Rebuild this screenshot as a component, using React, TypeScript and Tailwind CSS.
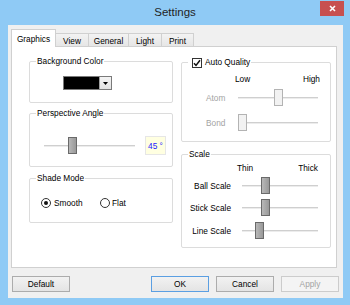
// Settings dialog (Win8 look) — Graphics tab with group boxes, sliders and a button row.
import type { ReactNode } from "react";

const TABS = ["Graphics", "View", "General", "Light", "Print"];
const TAB_W: Record<string, string> = {
  Graphics: "w-[45px]",
  View: "w-[34px]",
  General: "w-[41px]",
  Light: "w-[34px]",
  Print: "w-[33px]",
};

function Group({ title, className, children }: { title: ReactNode; className: string; children?: ReactNode }) {
  return (
    <div className={`relative border border-[#dcdcdc] rounded-[2px] ${className}`}>
      <div className="absolute left-[6px] top-[-6px] bg-white px-[1px] leading-[11px] flex items-center">{title}</div>
      {children}
    </div>
  );
}

function Slider({ w, pos, disabled }: { w: string; pos: number; disabled?: boolean }) {
  return (
    <div className={`relative h-[17px] shrink-0 ${w}`}>
      <div className="absolute left-0 right-0 top-[8px] h-[2px] border-t border-[#cfcfcf] bg-[#ececec]" />
      <div
        className={`absolute top-0 h-[17px] w-[9px] border ${
          disabled ? "border-[#b3b3b3] bg-[#f2f2f2]" : "border-[#6a6a6a] bg-gradient-to-r from-[#b8b8b8] to-[#999999]"
        }`}
        style={{ left: pos }}
      />
    </div>
  );
}

function Radio({ checked }: { checked?: boolean }) {
  return (
    <span className="w-[10px] h-[10px] rounded-full border border-[#333333] bg-white flex items-center justify-center shrink-0">
      {checked && <span className="w-[4px] h-[4px] rounded-full bg-[#111111]" />}
    </span>
  );
}

function Button({ label, kind }: { label: string; kind?: "focus" | "disabled" }) {
  const look =
    kind === "focus"
      ? "border-[#5b9fe2] bg-gradient-to-b from-[#f2f2f2] to-[#e4e4e4]"
      : kind === "disabled"
        ? "border-[#cccccc] bg-[#f4f4f4] text-[#a3a3a3]"
        : "border-[#acacac] bg-gradient-to-b from-[#f2f2f2] to-[#e4e4e4]";
  return <div className={`w-[58px] h-[16px] border flex items-center justify-center ${look}`}>{label}</div>;
}

export default function App() {
  return (
    <div className="w-[350px] h-[305px] bg-[#8fcaf5] flex flex-col font-['Liberation_Sans',Arial,sans-serif] text-[8.3px] leading-[10px] text-black select-none">
      {/* Title bar */}
      <div className="h-[25px] shrink-0 relative">
        <div className="text-center text-[11.5px] leading-[14px] pt-[5px] text-[#1f1f1f]">Settings</div>
        <div className="absolute top-[1px] right-[6px] w-[24px] h-[15px] bg-[#c75050] flex items-center justify-center">
          <svg width="7" height="7" viewBox="0 0 7 7">
            <path d="M1 1L6 6M6 1L1 6" stroke="white" strokeWidth="1.6" />
          </svg>
        </div>
      </div>

      {/* Client area */}
      <div className="ml-[8px] w-[335px] h-[273px] bg-[#f0f0f0] flex flex-col">
        <div className="pl-[3px] pt-[4px]">
          {/* Tabs */}
          <div className="flex items-end h-[17px]">
            {TABS.map((t, i) =>
              i === 0 ? (
                <div key={t} className={`relative z-10 h-[18px] mb-[-1px] bg-white border border-b-0 border-[#d0d0d0] pt-[4px] text-center ${TAB_W[t]}`}>
                  {t}
                </div>
              ) : (
                <div key={t} className={`h-[13px] ml-[-1px] border border-b-0 border-[#d0d0d0] bg-gradient-to-b from-[#f3f3f3] to-[#e6e6e6] pt-[2px] text-center ${TAB_W[t]}`}>
                  {t}
                </div>
              ),
            )}
          </div>

          {/* Panel */}
          <div className="w-[326px] h-[222px] bg-white border border-[#d0d0d0] flex items-start pt-[14px] pl-[17px]">
            {/* Left column */}
            <div className="w-[144px] flex flex-col">
              <Group title="Background Color" className="h-[42px] pt-[14px] pl-[33px]">
                <div className="flex w-[49px] h-[14px] border border-[#7a7a7a] bg-white">
                  <div className="w-[35px] bg-black" />
                  <div className="flex-1 flex items-center justify-center bg-gradient-to-b from-[#f4f4f4] to-[#e2e2e2] border-l border-[#a0a0a0]">
                    <svg width="5" height="3" viewBox="0 0 5 3">
                      <path d="M0 0H5L2.5 3Z" fill="#000" />
                    </svg>
                  </div>
                </div>
              </Group>

              <Group title="Perspective Angle" className="mt-[10px] h-[54px] pt-[22px] pl-[14px]">
                <div className="flex items-center h-[19px]">
                  <Slider w="w-[91px]" pos={24} />
                  <div className="ml-[10px] w-[21px] h-[19px] bg-[#ffffe1] border border-[#e6e6e6] flex items-center justify-center text-[#2323ff]">
                    45 °
                  </div>
                </div>
              </Group>

              <Group title="Shade Mode" className="mt-[11px] h-[45px] pt-[19px] pl-[11px]">
                <div className="flex items-center h-[10px]">
                  <Radio checked />
                  <span className="ml-[3px] w-[46px]">Smooth</span>
                  <Radio />
                  <span className="ml-[2px]">Flat</span>
                </div>
              </Group>
            </div>

            {/* Right column */}
            <div className="ml-[8px] w-[150px] mt-[1px] flex flex-col">
              <Group
                className="h-[80px] pt-[11px]"
                title={
                  <>
                    <span className="ml-[3px] w-[10px] h-[10px] border border-[#333333] bg-white flex items-center justify-center">
                      <svg width="8" height="8" viewBox="0 0 8 8">
                        <path d="M1 4.2L3 6.4L7 1.2" stroke="#111" strokeWidth="1.5" fill="none" />
                      </svg>
                    </span>
                    <span className="ml-[3px]">Auto Quality</span>
                  </>
                }
              >
                <div className="ml-[53px] w-[85px] flex justify-between h-[10px]">
                  <span>Low</span>
                  <span>High</span>
                </div>
                <div className="mt-[5px] flex items-center h-[17px]">
                  <span className="w-[56px] pl-[24px] text-[#a3a3a3]">Atom</span>
                  <Slider w="w-[80px]" pos={36} disabled />
                </div>
                <div className="mt-[8px] flex items-center h-[17px]">
                  <span className="w-[56px] pl-[24px] text-[#a3a3a3]">Bond</span>
                  <Slider w="w-[80px]" pos={0} disabled />
                </div>
              </Group>

              <Group title="Scale" className="mt-[12px] h-[94px] pt-[8px]">
                <div className="ml-[55px] w-[81px] flex justify-between h-[10px]">
                  <span>Thin</span>
                  <span>Thick</span>
                </div>
                <div className="mt-[4px] flex items-center h-[17px]">
                  <span className="w-[49px] text-right">Ball Scale</span>
                  <div className="ml-[11px]">
                    <Slider w="w-[76px]" pos={19} />
                  </div>
                </div>
                <div className="mt-[5px] flex items-center h-[17px]">
                  <span className="w-[49px] text-right">Stick Scale</span>
                  <div className="ml-[11px]">
                    <Slider w="w-[76px]" pos={19} />
                  </div>
                </div>
                <div className="mt-[6px] flex items-center h-[17px]">
                  <span className="w-[49px] text-right">Line Scale</span>
                  <div className="ml-[11px]">
                    <Slider w="w-[76px]" pos={13} />
                  </div>
                </div>
              </Group>
            </div>
          </div>
        </div>

        {/* Buttons */}
        <div className="flex mt-[8px] pl-[4px]">
          <Button label="Default" />
          <div className="ml-[81px] flex gap-[7px]">
            <Button label="OK" kind="focus" />
            <Button label="Cancel" />
            <Button label="Apply" kind="disabled" />
          </div>
        </div>
      </div>
    </div>
  );
}
